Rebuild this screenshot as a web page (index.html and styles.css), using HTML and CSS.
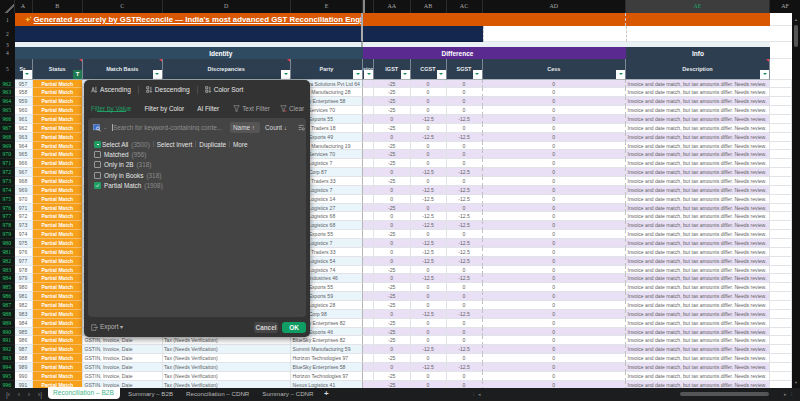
FILE: index.html
```html
<!DOCTYPE html>
<html lang="en">
<head>
    <meta charset="UTF-8">
    <title>Reconciliation - B2B</title>
    <link rel="stylesheet" href="styles.css">
</head>
<body>
    <div class="main">
        <div class="sheet">
            <div class="row col-heads">
                <div class="corner"></div>
                <div>A</div><div>B</div><div>C</div><div>D</div><div>E</div>
                <div class="freeze"></div>
                <div>AA</div><div>AB</div><div>AC</div><div>AD</div>
                <div class="col-active">AE</div>
                <div class="col-last">AF</div>
            </div>

            <div class="row row-1">
                <div class="num">1</div>
                <div class="banner">
                    <svg class="sparkle" viewBox="0 0 10 10"><path d="M4 1 5 4 8 5 5 6 4 9 3 6 0 5 3 4Z M8 0 8.5 1.5 10 2 8.5 2.5 8 4 7.5 2.5 6 2 7.5 1.5Z" fill="#f6c945"/></svg>
                    <span>Generated securely by GSTReconcile — India's most advanced GST Reconciliation Engi</span>
                </div>
                <div class="banner-rest"></div>
                <div class="banner-end"></div>
                <div class="blank"></div>
            </div>

            <div class="row row-2">
                <div class="num">2</div>
                <div class="navy navy-a"></div>
                <div class="navy navy-b"></div>
                <div class="blank dash-l"></div>
                <div class="blank dash-l"></div>
                <div class="blank"></div>
            </div>

            <div class="row row-3">
                <div class="num">3</div>
                <div class="pale pale-a"></div>
                <div class="pale pale-b"></div>
                <div class="blank"></div>
            </div>

            <div class="row row-4">
                <div class="num">4</div>
                <div class="group group-identity">Identity</div>
                <div class="group group-diff">Difference</div>
                <div class="group group-info">Info</div>
                <div class="blank"></div>
            </div>

            <div class="row row-5">
                <div class="num">5</div>
                <div class="hd">Sr.<i class="fbtn"></i></div>
                <div class="hd note">Status<i class="fbtn fbtn-on">T</i></div>
                <div class="hd note">Match Basis<i class="fbtn"></i></div>
                <div class="hd note">Discrepancies<i class="fbtn"></i></div>
                <div class="hd">Party<i class="fbtn"></i></div>
                <div class="hd hd-stub">sion<i class="fbtn"></i></div>
                <div class="hd">IGST<i class="fbtn"></i></div>
                <div class="hd">CGST<i class="fbtn"></i></div>
                <div class="hd">SGST<i class="fbtn"></i></div>
                <div class="hd">Cess<i class="fbtn"></i></div>
                <div class="hd note">Description<i class="fbtn"></i></div>
                <div class="blank"></div>
            </div>

            <div id="rows"></div>
        </div>

        <div class="vscroll">
            <span class="vs-arrow">▲</span>
            <span class="vs-thumb"></span>
            <span class="vs-arrow vs-down">▼</span>
        </div>
    </div>

    <div class="tabs">
        <div class="tab-nav"><span>|‹</span><span>‹</span><span>›</span><span>›|</span></div>
        <div class="tab tab-active">Reconciliation – B2B</div>
        <div class="tab">Summary – B2B</div>
        <div class="tab">Reconciliation – CDNR</div>
        <div class="tab">Summary – CDNR</div>
        <div class="tab tab-add">+</div>
        <div class="hscroll">
            <span>⁝</span><span class="hs-arrow">◂</span>
            <span class="hs-thumb"></span>
            <span class="hs-arrow">▸</span><span>⁝</span>
        </div>
    </div>

    <div class="filter-panel">
        <div class="sort-bar">
            <span class="sort-item">
                <svg class="ico" viewBox="0 0 10 10"><path d="M1 9 3 2 5 9M2 7H4M7 1V9M5.5 7.5 7 9 8.5 7.5"/></svg>Ascending
            </span>
            <span class="sep"></span>
            <span class="sort-item">
                <svg class="ico" viewBox="0 0 10 10"><path d="M1 1H4V4H1ZM1 6H4V9H1ZM7 1V9M5.5 7.5 7 9 8.5 7.5"/></svg>Descending
            </span>
            <span class="sep"></span>
            <span class="sort-item">
                <svg class="ico" viewBox="0 0 10 10"><path d="M1 1H4V4H1ZM1 6H4V9H1ZM7 1V9M5.5 7.5 7 9 8.5 7.5"/></svg>Color Sort
            </span>
        </div>

        <div class="filter-tabs">
            <span class="ftab ftab-active">Filter by Value</span>
            <span class="ftab">Filter by Color</span>
            <span class="ftab ftab-ai">AI Filter</span>
            <span class="ftab ftab-dim">
                <svg class="ico" viewBox="0 0 10 10"><path d="M1 1H9L6 5V9H4V5Z"/></svg>Text Filter
            </span>
            <span class="ftab ftab-dim">
                <svg class="ico" viewBox="0 0 10 10"><path d="M1 1H9L6 5V9H4V5Z"/><path class="ico-red" d="M6.5 7.5 9 10M9 7.5 6.5 10"/></svg>Clear
            </span>
        </div>

        <div class="filter-box">
            <div class="search-row">
                <svg class="search-ico" viewBox="0 0 12 10"><rect x="0.5" y="0.5" width="8" height="7" fill="#3b6fd0" stroke="#9db7e8" stroke-width=".6"/><circle cx="6.5" cy="5.5" r="2" fill="none" stroke="#e8e8e8"/><path d="M8 7 10 9.5" stroke="#e8e8e8"/></svg>
                <span class="search-caret">⌄</span>
                <span class="search-text">Search for keyword-containing conte...</span>
                <span class="sort-pill sort-pill-on">Name ↑</span>
                <span class="sort-pill">Count ↓</span>
                <svg class="list-ico" viewBox="0 0 10 10"><path d="M1 2H8M1 5H5M1 8H5"/><circle cx="7.5" cy="7" r="1.6"/></svg>
            </div>

            <div class="check-row check-all">
                <i class="check check-mixed"></i>
                <span>Select All</span><em>(3500)</em>
                <b class="bar"></b><span>Select Invert</span>
                <b class="bar"></b><span>Duplicate</span>
                <b class="bar"></b><span>More</span>
            </div>
            <div class="check-row"><i class="check"></i><span>Matched</span><em>(956)</em></div>
            <div class="check-row"><i class="check"></i><span>Only in 2B</span><em>(318)</em></div>
            <div class="check-row"><i class="check"></i><span>Only in Books</span><em>(318)</em></div>
            <div class="check-row">
                <i class="check check-on"><svg viewBox="0 0 8 8"><path d="M1.5 4 3.3 5.8 6.5 2.2"/></svg></i>
                <span>Partial Match</span><em>(1908)</em>
            </div>
        </div>

        <div class="panel-foot">
            <span class="export">
                <svg class="ico" viewBox="0 0 10 10"><path d="M7 3V1H1V9H7V7M4 5H9.5M8 3.5 9.5 5 8 6.5"/></svg>Export ▾
            </span>
            <span class="foot-btn">Cancel</span>
            <span class="foot-btn foot-ok">OK</span>
        </div>
    </div>

    <script src="app.js"></script>
</body>
</html>
```

FILE: styles.css
```css
:root {
    --cols: 14.5px 18px 50.5px 79.5px 128.5px 72px 11px 36.5px 36px 36px 143.5px 144px 22px;
}

html, body {
    margin: 0;
    height: 401px;
    overflow: hidden;
}

body {
    width: 800px;
    background-color: #1b1d1e;
    font-family: "Liberation Sans", Arial, sans-serif;
    position: relative;
    display: flex;
    flex-direction: column;
}

.main {
    display: flex;
    height: 388px;
    overflow: hidden;
}

.sheet {
    width: 792px;
    background-color: white;
}

.row {
    display: grid;
    grid-template-columns: var(--cols);
    overflow: hidden;
}

.col-heads {
    height: 13px;
    background-color: #111;
    color: #a8a8a8;
    font-family: "Liberation Serif", serif;
    font-size: 6px;
    line-height: 13px;
    text-align: center;
}

.col-heads > div {
    border-right: 1px solid #2b2b2b;
}

.corner {
    background: linear-gradient(135deg, transparent 62%, #666 63%, #666 72%, transparent 73%);
}

.freeze {
    background-color: #111;
    border-left: 2px solid #888;
}

.col-active {
    background-color: #3c3d3c;
    color: #1f9d63;
    border-bottom: 1px solid #8c9a6a;
}

.col-heads .col-last {
    padding-left: 8px;
    border-right: 0;
}

.num {
    background-color: #111;
    color: #a8a8a8;
    font-family: "Liberation Serif", serif;
    font-size: 5.5px;
    display: flex;
    align-items: center;
    justify-content: center;
}

.blank {
    background-color: white;
    border-bottom: 1px solid #e2e6e8;
}

.row-1 {
    height: 13px;
    grid-template-columns: 14.5px 348.5px 263px 144px 22px;
}

.banner {
    background-color: #d95700;
    color: white;
    font-size: 7.85px;
    font-weight: 700;
    text-decoration: underline;
    white-space: nowrap;
    overflow: hidden;
    display: flex;
    align-items: center;
    padding-left: 10px;
    border-right: 2px solid #aaa;
}

.sparkle {
    width: 7px;
    height: 7px;
    flex: none;
    margin-right: 2px;
}

.banner-rest {
    background-color: #d95700;
    border-right: 1px dashed #c9c9c9;
}

.banner-end {
    background-color: #d95700;
}

.row-2 {
    height: 16px;
    grid-template-columns: 14.5px 348.5px 119.5px 143.5px 144px 22px;
}

.navy {
    background-color: #14284f;
    border-bottom: 1px solid #0a1a38;
}

.navy-a {
    border-right: 2px solid #aaa;
}

.dash-l {
    border-left: 1px dashed #c9c9c9;
}

.row-3 {
    height: 5px;
    grid-template-columns: 14.5px 348.5px 407px 22px;
}

.pale {
    background-color: #e9f1f5;
    border-bottom: 1px solid #7f8c95;
}

.pale-a {
    border-right: 2px solid #aaa;
}

.pale-b {
    border-bottom-color: #cfd8dc;
}

.row-4 {
    height: 12px;
    grid-template-columns: 14.5px 348.5px 263px 144px 22px;
}

.group {
    color: white;
    font-size: 6.5px;
    font-weight: 700;
    display: flex;
    align-items: center;
    justify-content: center;
}

.group-identity {
    background-color: #2f4b62;
    padding-left: 64px;
}

.group-diff {
    background-color: #5b2a91;
    padding-right: 74px;
}

.group-info {
    background-color: #2c3e50;
}

.row-5 {
    height: 20.5px;
}

.hd {
    background-color: #2c3e50;
    color: #e8ecef;
    font-size: 5.5px;
    font-weight: 700;
    text-align: center;
    line-height: 20px;
    position: relative;
    border-right: 1px solid #7b8792;
    border-bottom: 1px solid #aab2b8;
    box-sizing: border-box;
    white-space: nowrap;
    overflow: hidden;
}

.note::before {
    content: "";
    position: absolute;
    top: 0;
    right: 0;
    border-top: 3px solid #e0404a;
    border-left: 3px solid transparent;
}

.fbtn {
    position: absolute;
    right: 0;
    bottom: 0;
    width: 9px;
    height: 9px;
    background-color: white;
    font-style: normal;
}

.fbtn::after {
    content: "";
    position: absolute;
    left: 2.5px;
    top: 3.5px;
    border-top: 2.5px solid #1f8a5f;
    border-left: 2px solid transparent;
    border-right: 2px solid transparent;
}

.fbtn-on {
    background-color: #1f7a52;
    color: white;
    font-size: 6px;
    line-height: 9px;
}

.fbtn-on::after {
    display: none;
}

#rows {
    overflow: hidden;
}

.data-row {
    height: 8.87px;
    color: #5f5f5f;
    font-size: 5.1px;
    line-height: 8.87px;
    white-space: nowrap;
}

.data-row > div {
    box-sizing: border-box;
    border-right: 1px solid #dfe3e6;
    border-bottom: 1px solid #e0e4e8;
    overflow: hidden;
}

.data-row .row-no {
    background-color: #0f1a15;
    color: #2ecc71;
    font-size: 5.6px;
    text-align: center;
    border-color: #222;
    font-family: "Liberation Serif", serif;
}

.data-row .center {
    text-align: center;
}

.data-row .left {
    padding-left: 1.5px;
}

.data-row .status {
    background-color: #f7a01c;
    color: white;
    font-weight: 700;
    text-align: center;
    border-bottom-color: #f9bd68;
}

.data-row:nth-child(odd) .tint {
    background-color: #e9f4fb;
}

.data-row:nth-child(odd) .mauve {
    background-color: #e9e0f5;
}

.data-row .edge {
    border-right: 1px dashed #bfbfbf;
}

.data-row .party {
    border-right-color: #b5b5b5;
}

.vscroll {
    width: 8px;
    background-color: #111;
    display: flex;
    flex-direction: column;
    align-items: center;
}

.vs-arrow {
    color: #777;
    font-size: 4px;
    margin-top: 17px;
}

.vs-thumb {
    width: 4px;
    height: 22px;
    background-color: #555;
    border-radius: 2px;
    margin-top: 3px;
}

.vs-arrow.vs-down {
    margin-top: auto;
    margin-bottom: 3px;
}

.tabs {
    height: 13px;
    display: flex;
    align-items: flex-start;
    background-color: #1b1d1e;
    color: #b9b9b9;
    font-size: 6.2px;
    white-space: nowrap;
}

.tab-nav {
    width: 48px;
    height: 12px;
    display: flex;
    align-items: center;
    justify-content: space-between;
    padding: 0 6px;
    box-sizing: border-box;
    color: #8a8a8a;
    font-size: 7px;
}

.tab {
    padding: 0 6.5px;
    line-height: 11px;
}

.tab-active {
    background-color: white;
    color: #3fb58a;
    font-size: 6.6px;
    border-radius: 0 0 4px 4px;
    height: 12px;
    line-height: 12px;
    margin: -1px 1.5px 0 0;
    padding: 0 5px;
    width: 72px;
    box-sizing: border-box;
    position: relative;
}

.tab-add {
    font-size: 8px;
    font-weight: 700;
    color: #ddd;
    padding: 0 4px;
}

.hscroll {
    margin-left: auto;
    width: 327px;
    height: 11px;
    display: flex;
    align-items: center;
    box-sizing: border-box;
    color: #777;
    font-size: 5px;
    padding-right: 8px;
}

.hs-arrow {
    margin: 0 4px;
}

.hs-thumb {
    display: block;
    width: 89px;
    height: 4px;
    background-color: #555;
    border-radius: 2px;
    margin: 0 11px 0 auto;
}

/* filter popup over the grid */
.filter-panel {
    position: absolute;
    left: 84px;
    top: 80px;
    width: 226px;
    height: 257px;
    box-sizing: border-box;
    background-color: #333;
    border-radius: 5px;
    box-shadow: 0 2px 6px rgba(0, 0, 0, 0.5);
    color: #e6e6e6;
    font-size: 6.4px;
    display: flex;
    flex-direction: column;
    white-space: nowrap;
}

.ico {
    width: 7px;
    height: 7px;
    margin-right: 2px;
    fill: none;
    stroke: currentColor;
    stroke-width: 0.8;
    flex: none;
}

.ico-red {
    stroke: #e0404a;
}

.sort-bar {
    height: 17px;
    margin-top: 1px;
    display: flex;
    align-items: center;
    padding-left: 7px;
    gap: 7px;
    font-size: 6.6px;
}

.sort-item {
    display: flex;
    align-items: center;
}

.sep {
    width: 1px;
    height: 8px;
    background-color: #4d4d4d;
}

.filter-tabs {
    height: 20px;
    display: flex;
    align-items: center;
    padding-left: 7px;
    position: relative;
}

.ftab {
    display: flex;
    align-items: center;
    color: #e6e6e6;
    margin-right: 13px;
}

.ftab-active {
    color: #1f9d63;
}

.ftab-active::after {
    content: "";
    position: absolute;
    left: 13px;
    top: 13px;
    width: 29px;
    height: 1px;
    background-color: #1f9d63;
}

.ftab-ai {
    margin-right: 14px;
}

.ftab-dim {
    color: #a5a5a5;
    margin-right: 10px;
}

.filter-box {
    margin: 0 4px;
    flex: 1;
    background-color: #444;
    border-radius: 4px;
    padding: 4px 0 4px 5px;
}

.search-row {
    height: 11px;
    display: flex;
    align-items: center;
    margin-bottom: 6px;
}

.search-row > * {
    flex: none;
}

.search-ico {
    width: 9px;
    height: 8px;
}

.search-caret {
    color: #999;
    font-size: 5px;
    margin: -2px 0 0 1px;
    width: 9px;
}

.search-text {
    color: #8e8e8e;
    width: 118px;
    border-left: 1px solid #aaa;
    box-sizing: border-box;
    overflow: hidden;
}

.sort-pill {
    padding: 0 3px;
    line-height: 11px;
    border-radius: 2px;
    margin-right: 2px;
    color: #dcdcdc;
}

.sort-pill-on {
    background-color: #555;
    width: 24px;
}

.list-ico {
    width: 7px;
    height: 7px;
    margin-left: 6px;
    fill: none;
    stroke: #ccc;
    stroke-width: 0.8;
}

.check-row {
    height: 10.4px;
    margin-left: 1px;
    display: flex;
    align-items: center;
    color: #e6e6e6;
}

.check-row em {
    font-style: normal;
    color: #8a8a8a;
    margin-left: 3px;
}

.check {
    width: 7px;
    height: 7px;
    box-sizing: border-box;
    border: 0.7px solid #9a9a9a;
    border-radius: 1px;
    margin-right: 3px;
    display: block;
    position: relative;
}

.check-all .check {
    margin-right: 1px;
}

.check-mixed,
.check-on {
    background-color: #1f9d63;
    border-color: #1f9d63;
}

.check-mixed::after {
    content: "";
    position: absolute;
    left: 1.5px;
    right: 1.5px;
    top: 2.5px;
    height: 1px;
    background-color: white;
}

.check-on svg {
    display: block;
    width: 100%;
    height: 100%;
    fill: none;
    stroke: white;
    stroke-width: 1.2;
}

.bar {
    width: 1px;
    height: 6px;
    background-color: #5c5c5c;
    margin: 0 3px;
}

.panel-foot {
    height: 20px;
    display: flex;
    align-items: center;
    padding: 0 4px 0 7px;
}

.export {
    display: flex;
    align-items: center;
    color: #b5b5b5;
    margin-right: auto;
}

.foot-btn {
    width: 24px;
    height: 11px;
    line-height: 11px;
    text-align: center;
    border-radius: 3px;
    background-color: #464646;
    font-weight: 700;
    margin-left: 4px;
    color: #d5d5d5;
}

.foot-ok {
    background-color: #0f9d63;
    color: white;
}
```

FILE: app.js
```javascript
// party name and IGST per row, first row is 962
const parties = [
    ['Sun Infra Solutions Pvt Ltd 64', -25], ['Summit Manufacturing 28', -25], ['BlueSky Enterprises 58', -25],
    ['Vertex Services 70', -25], ['Global Exports 55', 0], ['Sunrise Traders 18', -25],
    ['Global Exports 49', 0], ['Summit Manufacturing 19', -25], ['Vertex Services 70', -25],
    ['Nexus Logistics 7', -25], ['Global Corp 87', 0], ['Sunrise Traders 33', -25],
    ['Nexus Logistics 7', 0], ['Nexus Logistics 14', 0], ['Nexus Logistics 27', -25],
    ['Nexus Logistics 68', 0], ['Nexus Logistics 68', 0], ['Global Exports 55', -25],
    ['Nexus Logistics 7', 0], ['Sunrise Traders 33', 0], ['Nexus Logistics 54', 0],
    ['Nexus Logistics 74', -25], ['Global Industries 46', 0], ['Global Exports 55', -25],
    ['Global Exports 59', -25], ['Nexus Logistics 28', -25], ['Global Corp 98', 0],
    ['BlueSky Enterprises 82', -25], ['Global Exports 46', -25], ['BlueSky Enterprises 82', -25],
    ['Summit Manufacturing 59', 0], ['Horizon Technologies 97', -25], ['BlueSky Enterprises 58', 0],
    ['Horizon Technologies 97', -25], ['Nexus Logistics 41', -25]
];

const note = 'Invoice and date match, but tax amounts differ. Needs review.';
const firstVisible = 29; // rows above this sit behind the filter popup

document.getElementById('rows').innerHTML = parties.map(([party, igst], i) => {
    const half = igst === 0 ? -12.5 : 0;
    const basis = i < firstVisible ? '' : 'GSTIN, Invoice, Date';
    const issue = i < firstVisible ? '' : 'Tax (Needs Verification)';
    return `
        <div class="row data-row">
            <div class="row-no">${962 + i}</div>
            <div class="center tint">${957 + i}</div>
            <div class="status">Partial Match</div>
            <div class="left tint">${basis}</div>
            <div class="left tint">${issue}</div>
            <div class="left tint party">${party}</div>
            <div class="mauve"></div>
            <div class="center mauve">${igst}</div>
            <div class="center mauve">${half}</div>
            <div class="center mauve edge">${half}</div>
            <div class="center mauve edge">0</div>
            <div class="left mauve">${note}</div>
            <div></div>
        </div>
    `;
}).join('');
```
